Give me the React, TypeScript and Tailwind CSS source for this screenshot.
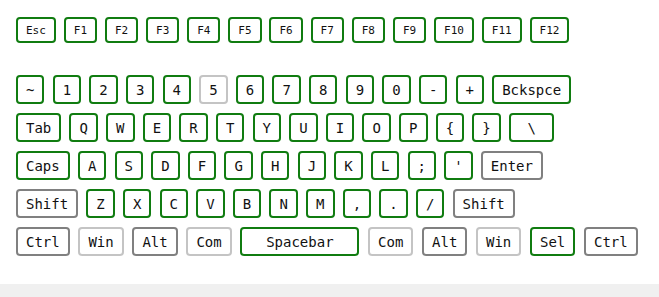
import React from "react";

type Tone = "g" | "d" | "l";

const border: Record<Tone, string> = {
  g: "border-[#107c10]",
  d: "border-[#808080]",
  l: "border-[#c4c4c4]",
};

function Key({ label, tone = "g", small = false, wide = false }: { label: string; tone?: Tone; small?: boolean; wide?: boolean }) {
  return (
    <div
      className={[
        "flex items-center justify-center border-2 rounded-[4px] px-2 text-[#111] whitespace-pre leading-none box-border",
        border[tone],
        small ? "h-[26px] text-[11px]" : "h-[29px] text-[14px]",
        wide ? "w-[119px]" : "",
      ].join(" ")}
      style={{ fontFamily: '"DejaVu Sans Mono", monospace' }}
    >
      {label}
    </div>
  );
}

type K = [string, Tone?] | string;

function Row({ keys, gap }: { keys: K[]; gap: "sm" | "md" | "lg" }) {
  const small = gap === "sm";
  const gapClass = gap === "sm" ? "gap-[7.9px]" : gap === "md" ? "gap-[8.2px]" : "gap-[8.7px]";
  return (
    <div className={"flex " + gapClass}>
      {keys.map((k, i) => {
        const [label, tone] = typeof k === "string" ? [k, "g" as Tone] : [k[0], (k[1] ?? "g") as Tone];
        return <Key key={i} label={label} tone={tone} small={small} wide={label === "Spacebar"} />;
      })}
    </div>
  );
}

export default function App() {
  return (
    <div className="w-[659px] h-[297px] flex flex-col bg-white">
      <div className="h-[284px] bg-white pt-[17px] pl-[16px] flex flex-col">
        <Row gap="sm" keys={["Esc", "F1", "F2", "F3", "F4", "F5", "F6", "F7", "F8", "F9", "F10", "F11", "F12"]} />
        <div className="mt-[32px] flex flex-col gap-[9px]">
          <Row gap="md" keys={["~", "1", "2", "3", "4", ["5", "l"], "6", "7", "8", "9", "0", "-", "+", "Bckspce"]} />
          <Row gap="md" keys={["Tab", "Q", "W", "E", "R", "T", "Y", "U", "I", "O", "P", "{", "}", " \\ "]} />
          <Row gap="md" keys={["Caps", "A", "S", "D", "F", "G", "H", "J", "K", "L", ";", "'", ["Enter", "d"]]} />
          <Row gap="md" keys={[["Shift", "d"], "Z", "X", "C", "V", "B", "N", "M", ",", ".", "/", ["Shift", "d"]]} />
          <Row
            gap="lg"
            keys={[
              ["Ctrl", "d"],
              ["Win", "l"],
              ["Alt", "d"],
              ["Com", "l"],
              "Spacebar",
              ["Com", "l"],
              ["Alt", "d"],
              ["Win", "l"],
              "Sel",
              ["Ctrl", "d"],
            ]}
          />
        </div>
      </div>
      <div className="h-[13px] bg-[#f0f0f0]" />
    </div>
  );
}
